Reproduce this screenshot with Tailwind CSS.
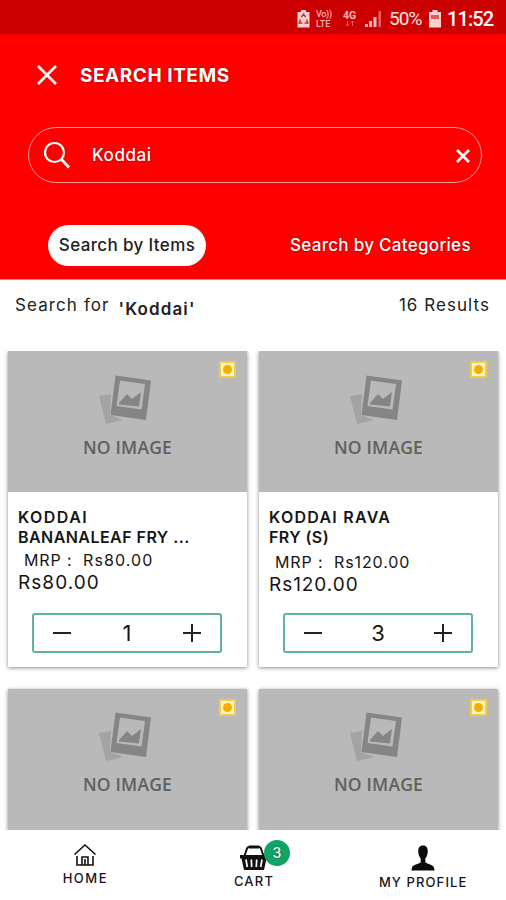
<!DOCTYPE html>
<html lang="en">
<head>
<meta charset="utf-8">
<meta name="viewport" content="width=device-width, initial-scale=1">
<title>Search Items</title>
<script src="https://cdn.jsdelivr.net/npm/@tailwindcss/browser@4"></script>
</head>
<body class="bg-white">
<svg class="hidden">
  <symbol id="noimg" viewBox="0 0 54 50">
    <path d="M0 21 L12 19 L11 40 L24 45 L7 49 Z" fill="#a3a3a3"/>
    <path d="M16.500 0.500 L52 5.500 L47 45 L11.500 40 Z" fill="#858585"/>
    <path d="M21 5.500 L46 9 L42.500 34.500 L17.500 31 Z" fill="#b9b9b9"/>
    <path d="M20 28 L28 19 L33 24 L42 17 L40 31.500 L20 29.500 Z" fill="#858585"/>
  </symbol>
</svg>
<div class="flex h-[900px] w-[506px] flex-col overflow-hidden font-['Inter','Noto_Sans',sans-serif] text-[#161616]">
  <!-- Status bar -->
  <div class="flex h-[34px] shrink-0 items-center bg-[#cb0000] pt-[3px] pl-[297px] text-[#ffe3e3]">
    <svg class="h-[18px] w-[13px] shrink-0" viewBox="0 0 13 18"><path d="M4 0h5v2h3.500v15.500H.5V2H4z" fill="#ffd0d0"/><path d="M4.300 7 6.500 4.200 8.700 7M3.500 9.500 2.200 13H5.500M9.500 9.500l1.300 3.500H7.500" stroke="#c23030" stroke-width="1.500" fill="none"/></svg>
    <div class="ml-[6px] w-[19px] shrink-0 font-['Roboto'] text-[9px] leading-[10px] font-medium text-[#ffb5b5]"><div class="tracking-[-0.3px]">Vo))</div><div>LTE</div></div>
    <div class="ml-[8px] w-[16px] shrink-0 font-['Roboto'] text-[10.500px] leading-[9px] font-bold text-[#ffb5b5]"><div>4G</div><svg class="ml-[2px] block h-[7px] w-[10px]" viewBox="0 0 10 7"><path d="M2.500 1v5M1 4.500 2.500 6 4 4.500M7.500 6V1M6 2.500 7.500 1 9 2.500" stroke="#f25c5c" fill="none"/></svg></div>
    <svg class="ml-[6px] h-[18px] w-[17px] shrink-0" viewBox="0 0 17 18"><path d="M0 14h3v3H0zM4 11h3v6H4zM8.500 7h3v10h-3z" fill="#ffb5b5"/><path d="M13.500 1h2.500v16h-2.500z" fill="#ea6262"/></svg>
    <div class="ml-[7px] w-[34px] shrink-0 font-['Roboto'] text-[19px] leading-[22px] tracking-[-0.9px] whitespace-nowrap">50%</div>
    <svg class="ml-[6px] h-[18px] w-[12px] shrink-0" viewBox="0 0 12 18"><path d="M3.500 0h5v2H12v15.500H0V2h3.500z" fill="#ffd0d0"/><path d="M2 5h8v4H2z" fill="#dc5b5b"/></svg>
    <div class="ml-[6px] font-['Roboto'] text-[20px] leading-[22px] font-medium tracking-[-0.9px] text-white">11:52</div>
  </div>
  <!-- Header -->
  <div class="h-[245px] shrink-0 bg-[#fe0000] text-white">
    <div class="flex h-[82px] items-center pl-[37px] [text-shadow:0_0_2px_#0007]">
      <svg class="h-5 w-5" viewBox="0 0 20 20"><path d="M1 1l18 18M19 1L1 19" stroke="#fff" stroke-width="2.600"/></svg>
      <h1 class="mt-[2px] ml-[23px] text-[19px] leading-6 font-bold tracking-[0.550px]">SEARCH ITEMS</h1>
    </div>
    <div class="mt-[11px] ml-[28px] flex h-[56px] w-[454px] items-center rounded-full border border-[#ff9d9d] pr-[11px] pl-[14px]">
      <svg class="h-[28px] w-[28px]" viewBox="0 0 28 28"><circle cx="11.500" cy="11.500" r="9.500" stroke="#fff" stroke-width="2.200" fill="none"/><path d="M18.300 18.300 26 26.500" stroke="#fff" stroke-width="2.800"/></svg>
      <span class="ml-[21px] text-[17px] leading-6 font-medium tracking-[0.550px] [text-shadow:0_0_2px_#0007]">Koddai</span>
      <svg class="mt-[1px] ml-auto h-[14px] w-[14px]" viewBox="0 0 14 14"><path d="M1 1l12 12M13 1L1 13" stroke="#fff" stroke-width="2.600"/></svg>
    </div>
    <div class="mt-[42px] flex items-center">
      <div class="ml-[48px] flex h-[41px] w-[158px] items-center justify-center rounded-full bg-white pt-px text-[17px] font-medium tracking-[0.370px] whitespace-nowrap text-[#222]">Search by Items</div>
      <div class="ml-[84px] pt-px text-[17px] font-medium tracking-[0.300px] whitespace-nowrap [text-shadow:0_0_2px_#0007]">Search by Categories</div>
    </div>
  </div>
  <!-- Result summary -->
  <div class="flex h-[72px] shrink-0 items-start border-t border-[#ff8585] pt-[13px] pr-[16px] pl-[15px] text-[17px] leading-6 text-[#222]">
    <span class="tracking-[1.100px]">Search for</span>
    <span class="mt-[4px] ml-[9px] font-semibold tracking-[1.100px]">'Koddai'</span>
    <span class="ml-auto tracking-[1.050px]">16 Results</span>
  </div>
  <!-- Product grid -->
  <div class="min-h-0 flex-1 overflow-hidden pl-[8px]">
    <div class="grid grid-cols-[239px_239px] gap-x-[12px] gap-y-[22px]">
      <div class="h-[316px] bg-white shadow-[0_1px_4px_#0007]">
        <div class="relative flex h-[141px] flex-col items-center bg-[#b9b9b9] pt-[24px]">
          <svg class="mr-[3px] h-[50px] w-[54px]"><use href="#noimg"/></svg>
          <div class="mt-[10px] font-['Open_Sans'] text-[17.500px] leading-6 font-semibold tracking-[0.200px] text-[#606060]">NO IMAGE</div>
          <div class="absolute top-[10px] right-[11px] flex h-[17px] w-[17px] items-center justify-center border-2 border-[#f8ca3c] bg-[#fff5cd]"><div class="h-[9px] w-[9px] rounded-full bg-[#efb000]"></div></div>
        </div>
        <div class="pt-[15px] pl-[10px]">
          <div class="text-[16px] leading-[20px] font-semibold"><div class="tracking-[1.450px]">KODDAI</div><div class="tracking-[0.450px]">BANANALEAF FRY ...</div></div>
          <div class="mt-[4px] flex pl-[6px] text-[16px] leading-[18px]"><span class="w-[59px] tracking-[0.900px]">MRP :</span><span class="tracking-[1.100px]">Rs80.00</span></div>
          <div class="mt-[3px] text-[19px] leading-[22px] tracking-[1.050px]">Rs80.00</div>
        </div>
        <div class="mt-[19px] ml-[24px] flex h-[40px] w-[190px] items-center justify-between rounded-[3px] border-2 border-[#5fb497] px-[18px] text-[22px]">
          <svg class="h-5 w-5" viewBox="0 0 20 20"><path d="M1 10h18" stroke="#222" stroke-width="2"/></svg><span>1</span><svg class="h-5 w-5" viewBox="0 0 20 20"><path d="M1 10h18M10 1v18" stroke="#222" stroke-width="2"/></svg>
        </div>
      </div>
      <div class="h-[316px] bg-white shadow-[0_1px_4px_#0007]">
        <div class="relative flex h-[141px] flex-col items-center bg-[#b9b9b9] pt-[24px]">
          <svg class="mr-[3px] h-[50px] w-[54px]"><use href="#noimg"/></svg>
          <div class="mt-[10px] font-['Open_Sans'] text-[17.500px] leading-6 font-semibold tracking-[0.200px] text-[#606060]">NO IMAGE</div>
          <div class="absolute top-[10px] right-[11px] flex h-[17px] w-[17px] items-center justify-center border-2 border-[#f8ca3c] bg-[#fff5cd]"><div class="h-[9px] w-[9px] rounded-full bg-[#efb000]"></div></div>
        </div>
        <div class="pt-[15px] pl-[10px]">
          <div class="text-[16px] leading-[20px] font-semibold"><div class="tracking-[1.250px]">KODDAI RAVA</div><div class="tracking-[0.400px]">FRY (S)</div></div>
          <div class="mt-[6px] flex pl-[6px] text-[16px] leading-[18px]"><span class="w-[59px] tracking-[0.900px]">MRP :</span><span class="tracking-[0.900px]">Rs120.00</span></div>
          <div class="mt-[3px] text-[19px] leading-[22px] tracking-[0.950px]">Rs120.00</div>
        </div>
        <div class="mt-[17px] ml-[24px] flex h-[40px] w-[190px] items-center justify-between rounded-[3px] border-2 border-[#5fb497] px-[18px] text-[22px]">
          <svg class="h-5 w-5" viewBox="0 0 20 20"><path d="M1 10h18" stroke="#222" stroke-width="2"/></svg><span>3</span><svg class="h-5 w-5" viewBox="0 0 20 20"><path d="M1 10h18M10 1v18" stroke="#222" stroke-width="2"/></svg>
        </div>
      </div>
      <div class="h-[316px] bg-white shadow-[0_1px_4px_#0007]">
        <div class="relative flex h-[141px] flex-col items-center bg-[#b9b9b9] pt-[23px]">
          <svg class="mr-[3px] h-[50px] w-[54px]"><use href="#noimg"/></svg>
          <div class="mt-[10px] font-['Open_Sans'] text-[17.500px] leading-6 font-semibold tracking-[0.200px] text-[#606060]">NO IMAGE</div>
          <div class="absolute top-[10px] right-[11px] flex h-[17px] w-[17px] items-center justify-center border-2 border-[#f8ca3c] bg-[#fff5cd]"><div class="h-[9px] w-[9px] rounded-full bg-[#efb000]"></div></div>
        </div>
      </div>
      <div class="h-[316px] bg-white shadow-[0_1px_4px_#0007]">
        <div class="relative flex h-[141px] flex-col items-center bg-[#b9b9b9] pt-[23px]">
          <svg class="mr-[3px] h-[50px] w-[54px]"><use href="#noimg"/></svg>
          <div class="mt-[10px] font-['Open_Sans'] text-[17.500px] leading-6 font-semibold tracking-[0.200px] text-[#606060]">NO IMAGE</div>
          <div class="absolute top-[10px] right-[11px] flex h-[17px] w-[17px] items-center justify-center border-2 border-[#f8ca3c] bg-[#fff5cd]"><div class="h-[9px] w-[9px] rounded-full bg-[#efb000]"></div></div>
        </div>
      </div>
    </div>
  </div>
  <!-- Bottom navigation -->
  <div class="grid h-[70px] shrink-0 grid-cols-3 bg-white text-[13px] leading-4 font-medium">
    <div class="flex flex-col items-center pt-[13px] pl-[2px]">
      <svg class="h-[24px] w-[24px]" viewBox="0 0 24 24"><path d="M1.500 11.500 12 2l10.500 9.500M4 13v9h16v-9M9 22v-8h6v8M12 16v6" stroke="#111" stroke-width="1.600" fill="none"/></svg>
      <div class="mt-[3px] tracking-[1.500px]">HOME</div>
    </div>
    <div class="flex flex-col items-center pt-[15px] pl-[2px]">
      <div class="relative h-[26px] w-[28px]">
        <svg class="h-[26px] w-[28px]" viewBox="0 0 28 26"><path d="M4.500 11 7 3.500Q7.500 2 9 2h10q1.500 0 2 1.500L23.500 11" stroke="#111" stroke-width="2" fill="none"/><path d="M9 .5h10v3H9zM0 10h28v3.500h-1.500L24 25H4L1.500 13.500H0z" fill="#111"/><path d="M6 14.500l1.300 7.500M11.300 14.500l.4 7.500M16.700 14.500l-.4 7.500M22 14.500l-1.300 7.500" stroke="#fff" stroke-width="1.700"/></svg>
        <div class="absolute -top-[5px] left-[24px] flex h-[26px] w-[26px] items-center justify-center rounded-full bg-[#10a467] text-[14px] text-white [text-shadow:0_0_2px_#0008]">3</div>
      </div>
      <div class="mt-[2px] tracking-[1.200px]">CART</div>
    </div>
    <div class="flex flex-col items-center pt-[15px] pl-[3px]">
      <svg class="h-[26px] w-[24px]" viewBox="0 0 24 26"><path d="M12 .5c3.500 0 5 2.500 4.700 6.500-.2 3-1 5-2.400 6.500v3.700c1.200 1.500 7.200 2.300 8.400 4.700.5 1 .6 2 .8 3.600H.5c.2-1.600.3-2.600.8-3.600 1.200-2.400 7.200-3.200 8.400-4.700v-3.700C8.300 12 7.500 10 7.300 7 7 3 8.500.5 12 .5z" fill="#0a0a0a"/></svg>
      <div class="mt-[3px] tracking-[1.100px]">MY PROFILE</div>
    </div>
  </div>
</div>
</body>
</html>
